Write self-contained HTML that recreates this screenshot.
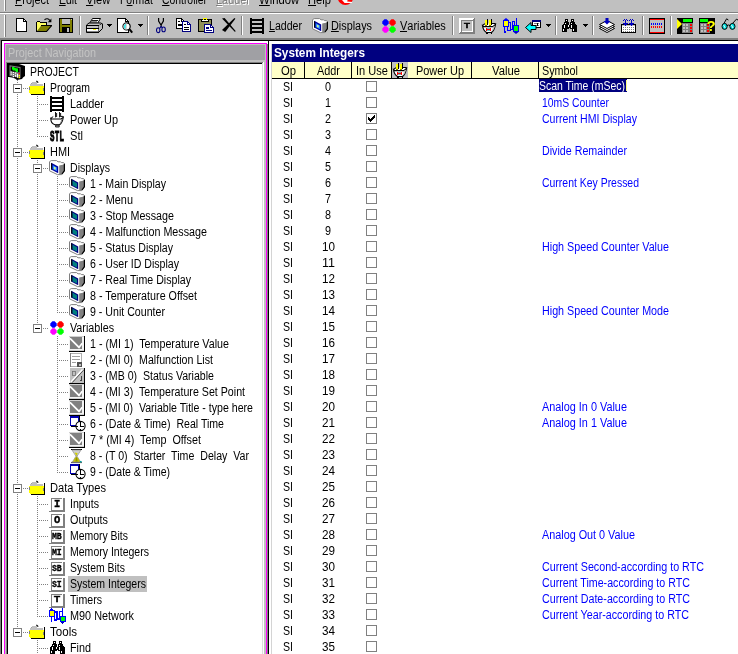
<!DOCTYPE html>
<html><head><meta charset="utf-8"><title>System Integers</title>
<style>
html,body{margin:0;padding:0;background:#c0c0c0;}
body{will-change:transform;width:738px;height:654px;overflow:hidden;position:relative;font-family:"Liberation Sans",sans-serif;}
.r{position:absolute;display:block;}
.t{position:absolute;display:inline-block;white-space:pre;font-size:12.5px;line-height:13px;transform-origin:0 0;}
u{text-decoration:none;border-bottom:1px solid currentColor;display:inline-block;line-height:7.6px;}
svg text{font-family:"Liberation Sans",sans-serif;}
.dv{width:1px;background:repeating-linear-gradient(to bottom,#808080 0,#808080 1px,transparent 1px,transparent 2px)}
.dh{height:1px;background:repeating-linear-gradient(to right,#808080 0,#808080 1px,transparent 1px,transparent 2px)}
</style></head><body>

<div class="r" style="left:4px;top:0px;width:1px;height:11px;background:#fff;"></div>
<div class="r" style="left:5px;top:0px;width:1px;height:11px;background:#808080;"></div>
<span class="t " style="left:15.4px;top:-5.8px;color:#000;transform:scaleX(0.874);"><u>P</u>roject</span>
<span class="t " style="left:59.4px;top:-5.8px;color:#000;transform:scaleX(0.835);"><u>E</u>dit</span>
<span class="t " style="left:86.4px;top:-5.8px;color:#000;transform:scaleX(0.893);"><u>V</u>iew</span>
<span class="t " style="left:120.4px;top:-5.8px;color:#000;transform:scaleX(0.833);">F<u>o</u>rmat</span>
<span class="t " style="left:162.4px;top:-5.8px;color:#000;transform:scaleX(0.830);"><u>C</u>ontroller</span>
<span class="t " style="left:259.4px;top:-5.8px;color:#000;transform:scaleX(0.900);"><u>W</u>indow</span>
<span class="t " style="left:308.4px;top:-5.8px;color:#000;transform:scaleX(0.894);"><u>H</u>elp</span>
<span class="t " style="left:217.4px;top:-4.8px;color:#fff;transform:scaleX(0.873);"><u>L</u>adder</span>
<span class="t " style="left:216.4px;top:-5.8px;color:#808080;transform:scaleX(0.873);"><u>L</u>adder</span>
<svg class="r" style="left:337px;top:0px;overflow:hidden;" width="18" height="7" viewBox="0 0 18 7"><circle cx="8.4" cy="-2.6" r="7.7" fill="#ff0000"/><polygon points="5,0 10.6,0 10.2,1.5 15.4,1.9 14.6,3 7.6,3" fill="#fff"/></svg>
<div class="r" style="left:0px;top:12px;width:738px;height:1px;background:#808080;"></div>
<div class="r" style="left:0px;top:13px;width:738px;height:1px;background:#fff;"></div>
<div class="r" style="left:4px;top:15px;width:1px;height:22px;background:#fff;"></div>
<div class="r" style="left:5px;top:15px;width:1px;height:22px;background:#808080;"></div>
<div class="r" style="left:79px;top:16px;width:1px;height:19px;background:#808080;"></div>
<div class="r" style="left:80px;top:16px;width:1px;height:19px;background:#fff;"></div>
<div class="r" style="left:147px;top:16px;width:1px;height:19px;background:#808080;"></div>
<div class="r" style="left:148px;top:16px;width:1px;height:19px;background:#fff;"></div>
<div class="r" style="left:241px;top:16px;width:1px;height:19px;background:#808080;"></div>
<div class="r" style="left:242px;top:16px;width:1px;height:19px;background:#fff;"></div>
<div class="r" style="left:452px;top:16px;width:1px;height:19px;background:#808080;"></div>
<div class="r" style="left:453px;top:16px;width:1px;height:19px;background:#fff;"></div>
<div class="r" style="left:555px;top:16px;width:1px;height:19px;background:#808080;"></div>
<div class="r" style="left:556px;top:16px;width:1px;height:19px;background:#fff;"></div>
<div class="r" style="left:592px;top:16px;width:1px;height:19px;background:#808080;"></div>
<div class="r" style="left:593px;top:16px;width:1px;height:19px;background:#fff;"></div>
<div class="r" style="left:642px;top:16px;width:1px;height:19px;background:#808080;"></div>
<div class="r" style="left:643px;top:16px;width:1px;height:19px;background:#fff;"></div>
<div class="r" style="left:670px;top:16px;width:1px;height:19px;background:#808080;"></div>
<div class="r" style="left:671px;top:16px;width:1px;height:19px;background:#fff;"></div>
<svg class="r" style="left:16px;top:18px;" width="11" height="14" viewBox="0 0 11 14" shape-rendering="crispEdges"><path d="M0.5 0.5H7.5L10.5 3.5V13.5H0.5z" fill="#fff" stroke="#000" stroke-width="1"/><path d="M7 1h1v3h-1zM8 3h2v1h-2z" fill="#000"/></svg>
<svg class="r" style="left:36px;top:18px;" width="16" height="14" viewBox="0 0 16 14" shape-rendering="crispEdges"><g shape-rendering="auto"><path d="M8.5 1.8 Q11.5 -0.6 14 2.6" fill="none" stroke="#000" stroke-width="1.1"/><path d="M15.4 0.6V4.2H11.8z" fill="#000"/></g><path d="M1 3h3v1h-3zM0 4h1v10h-1zM4 4h7v1h-7zM10 4h1v3h-1zM0 13h11v1h-11zM5 7h11v1h-11z" fill="#000"/><path d="M1 4h3v1h-3zM1 5h9v2h-9zM1 7h4v1h-4zM1 8h3v2h-3zM1 10h2v1h-2zM1 11h1v1h-1z" fill="#ffff60"/><polygon points="5,8 15.5,8 10.5,13 1,13" fill="#808000" shape-rendering="auto"/><path d="M15.6 7.6L10.6 13.4" stroke="#000" stroke-width="1.1" shape-rendering="auto"/></svg>
<svg class="r" style="left:59px;top:18px;" width="14" height="15" viewBox="0 0 14 15" shape-rendering="crispEdges"><path d="M0 0h14v15h-14z" fill="#000"/><path d="M1 1h2v13h-2zM11 1h2v13h-2zM3 7h8v2h-8z" fill="#808000"/><path d="M3 1h8v6h-8zM12 1h1v1h-1z" fill="#c0c0c0"/><path d="M3 6h8v1h-8z" fill="#000"/><path d="M8 10h2v4h-2z" fill="#c0c0c0"/></svg>
<svg class="r" style="left:86px;top:18px;" width="17" height="15" viewBox="0 0 17 15" shape-rendering="crispEdges"><g shape-rendering="auto"><polygon points="3.5,5.5 6.5,0.5 14.5,0.5 11.5,5.5" fill="#fff" stroke="#000" stroke-width="1"/><path d="M6 2.5H12M5 4H11" stroke="#000" stroke-width=".9"/><polygon points="0.5,7 3,5 14.8,5 16.5,6 16.5,10.5 12.5,14.5 0.5,14.5" fill="#c0c0c0" stroke="#000" stroke-width="1"/><path d="M12.5 7.5V14 M12.5 7.5L16.3 5.6" stroke="#000" stroke-width="1" stroke-dasharray="1 1"/></g><path d="M0 7h13v1h-13zM0 10h13v1h-13zM1 14h12v1h-12z" fill="#000"/><path d="M1 11h11v2h-11z" fill="#fff"/><path d="M1 13h11v1h-11z" fill="#808080"/><path d="M7 11h3v1h-3z" fill="#ffff00"/></svg>
<svg class="r" style="left:117px;top:18px;" width="16" height="16" viewBox="0 0 16 16" shape-rendering="crispEdges"><path d="M0.5 0.5H8.5L11.5 3.5V14.5H0.5z" fill="#fff" stroke="#000" stroke-width="1"/><path d="M8 1h1v3h-1zM9 3h2v1h-2z" fill="#000"/><g shape-rendering="auto"><circle cx="9.6" cy="8.4" r="3.6" fill="#fff" stroke="#000" stroke-width="1.2"/><path d="M9.6 5.2A3.2 3.2 0 0 0 9.6 11.6z" fill="#c0c0c0"/><path d="M8.6 6.4Q7 8 8 10.4" stroke="#00ffff" stroke-width="1.2" fill="none"/><path d="M12.4 11.2L15.2 14.6" stroke="#000" stroke-width="2"/></g></svg>
<svg class="r" style="left:156px;top:18px;" width="11" height="16" viewBox="0 0 11 16" shape-rendering="crispEdges"><g shape-rendering="auto" fill="none"><path d="M2.6 0V3L5.2 7.4V9 M7.4 0V3L4.8 7.4" stroke="#000" stroke-width="1.2"/><ellipse cx="2.2" cy="12.2" rx="1.7" ry="2.4" stroke="#000080" stroke-width="1.1"/><ellipse cx="7.6" cy="11.4" rx="1.7" ry="2.4" stroke="#000080" stroke-width="1.1"/><path d="M3.6 10.4L5 8.6L6.2 9.4" stroke="#000080" stroke-width="1.1"/></g></svg>
<svg class="r" style="left:176px;top:18px;" width="15" height="14" viewBox="0 0 15 14" shape-rendering="crispEdges"><path d="M0.5 0.5H5.5L8.5 3.5V10.5H0.5z" fill="#fff" stroke="#000" stroke-width="1"/><path d="M5 1h1v3h-1zM6 3h2v1h-2zM2 3h2v1h-2zM2 6h5v2h-5z" fill="#000"/><path d="M6.5 3.5H11.5L14.5 6.5V13.5H6.5z" fill="#fff" stroke="#000080" stroke-width="1"/><path d="M11 4h1v3h-1zM12 6h2v1h-2z" fill="#000080"/><path d="M8 6h2v1h-2zM8 9h5v1h-5zM8 11h5v1h-5z" fill="#000"/></svg>
<svg class="r" style="left:198px;top:18px;" width="16" height="15" viewBox="0 0 16 15" shape-rendering="crispEdges"><path d="M0 1h14v13h-14z" fill="#000"/><path d="M1 2h12v11h-12z" fill="#909058"/><path d="M3 1h8v3h-8z" fill="#000"/><path d="M4 2h6v1h-6z" fill="#fff"/><path d="M5 0h4v1h-4zM5 1h1v1h-1zM8 1h1v1h-1z" fill="#ffff00"/><path d="M6.5 6.5H12.5L15.5 9.5V14.5H6.5z" fill="#fff" stroke="#000080" stroke-width="1"/><path d="M12 7h1v3h-1zM13 9h2v1h-2zM8 9h3v2h-3zM8 12h6v1h-6z" fill="#000080"/></svg>
<svg class="r" style="left:222px;top:18px;" width="14" height="14" viewBox="0 0 14 14" shape-rendering="crispEdges"><g shape-rendering="auto"><path d="M0 0.5L2.6 0L13.6 13L13 14z" fill="#000"/><path d="M12.4 0L13.4 0.8L3.2 14L0 12z" fill="#000"/></g></svg>
<svg class="r" style="left:250px;top:18px;" width="14" height="16" viewBox="0 0 14 16" shape-rendering="crispEdges"><path d="M0 0h2v16h-2zM12 0h2v16h-2zM2 1h10v2h-10zM2 5h10v2h-10zM2 9h10v2h-10zM2 13h10v2h-10z" fill="#000"/></svg>
<svg class="r" style="left:312px;top:18px;" width="16" height="16" viewBox="0 0 16 16"><path d="M0.5 1.7L2.2 0.6H7.6L9 1.8H11.6L12.4 2.6H14.6L15.4 3.6V10.6L13.2 13.6L12.8 14.6H8.4L0.5 10.8Z" fill="#fff" stroke="#808080" stroke-width="1"/><polygon points="10.2,5.4 15,4.4 15,10.6 13,13.6 12.6,14.6 10.2,14.6" fill="#808080"/><path d="M15.4 3.8V10.6L13 14" stroke="#000" stroke-width="1.3" fill="none"/><polygon points="2.2,2.8 9.2,6.6 9.2,13.2 2.2,9.6" fill="#0000a0"/><polygon points="3.6,5 8,7.4 8,11.2 3.6,9" fill="#2080ff"/><polygon points="4.8,6.6 6.8,7.6 6.8,9.8 4.8,8.8" fill="#80e0ff"/><rect x="5.3" y="7.2" width="1" height="2.2" fill="#ffff40"/><path d="M2.6 3.2V9.6" stroke="#000" stroke-width="1"/></svg>
<svg class="r" style="left:382px;top:18px;" width="16" height="16" viewBox="0 0 16 16"><polygon points="2.4,1.3 4.6,1.3 6.7,3.4 6.7,5.6 4.6,7.7 2.4,7.7 0.3,5.6 0.3,3.4" fill="#0000ff"/><polygon points="9.4,1.3 11.6,1.3 13.7,3.4 13.7,5.6 11.6,7.7 9.4,7.7 7.3,5.6 7.3,3.4" fill="#ff0000"/><polygon points="2.4,8.3 4.6,8.3 6.7,10.4 6.7,12.6 4.6,14.7 2.4,14.7 0.3,12.6 0.3,10.4" fill="#ff00ff"/><polygon points="9.4,8.3 11.6,8.3 13.7,10.4 13.7,12.6 11.6,14.7 9.4,14.7 7.3,12.6 7.3,10.4" fill="#00ff00"/></svg>
<svg class="r" style="left:459px;top:18px;" width="16" height="16" viewBox="0 0 16 16" shape-rendering="crispEdges"><path d="M0 0h16v16h-16z" fill="#fff"/><path d="M14 0h2v16h-2zM0 14h16v2h-16z" fill="#808080"/><path d="M0 14h1v1h-1zM14 0h1v1h-1z" fill="#fff"/><path d="M2 2h12v12h-12z" fill="#808080"/><path d="M3 13h11v1h-11zM13 3h1v11h-1z" fill="#fff"/><path d="M3 3h10v10h-10z" fill="#c0c0c0"/></svg>
<span class="r" style="left:463.6px;top:21.4px;font:bold 9px/10px 'Liberation Sans',sans-serif;color:#000;-webkit-text-stroke:.5px #000;transform:scale(1.08,.9);transform-origin:0 0">T</span>
<svg class="r" style="left:481px;top:18px;" width="16" height="16" viewBox="0 0 16 16" shape-rendering="crispEdges"><polygon points="1.5,7.5 4,5.6 14,5.5 14.6,6.4 11.8,8.6 2.6,8.6" fill="#fff" shape-rendering="auto"/><path d="M4 2h2v6h-2zM8 2h2v6h-2z" fill="#ffff00"/><path d="M6 1h1v6h-1zM10 1h1v6h-1z" fill="#000"/><path d="M4 7h2v1h-2zM8 7h2v1h-2z" fill="#808000"/><g shape-rendering="auto"><path d="M1.5 7.6 Q2.2 12.6 5.5 14.5 H10.5 Q13.6 12 14.5 6.4 L11.8 8.6 H2.6z" fill="#fff" stroke="#000" stroke-width="1.1"/><path d="M1.5 7.5 L4 5.6 M11 5.5 H14 L14.6 6.4" fill="none" stroke="#000" stroke-width="1.1"/><path d="M12 9 L14 7.4 Q13.4 11.6 10.8 13.8z" fill="#c0c0c0"/></g><path d="M5 10h1.4v3h-1.4zM8.6 10h1.4v3h-1.4zM5 11h5v1h-5z" fill="#ff0000"/><path d="M6.4 10h2.2v1h-2.2zM6.4 12h2.2v1h-2.2z" fill="#60c0c0"/><path d="M5 15h6v1h-6z" fill="#000"/><path d="M6.5 15h3v1h-3z" fill="#c0c0c0"/></svg>
<svg class="r" style="left:503px;top:18px;" width="17" height="16" viewBox="0 0 17 16" shape-rendering="crispEdges"><path d="M2 13V15 M13.5 0V8 M5.5 4.5H7.5V11.5H9.5V3.5H11.5V8 M4.5 9V12.5H7.5" stroke="#0000ff" stroke-width="1" fill="none"/><path d="M0 2h6v7h-6zM10 7h6v7h-6zM1 9h1v6h-1z" fill="#0000ff"/><path d="M1 3h4v5h-4z" fill="#ffff00"/><path d="M11 8h4v5h-4z" fill="#00ff00"/><polygon points="3,0 5.5,2 0.5,2" fill="#0000ff" shape-rendering="auto"/><polygon points="10.5,14 15.5,14 13,16" fill="#0000c0" shape-rendering="auto"/></svg>
<svg class="r" style="left:525px;top:20px;" width="16" height="13" viewBox="0 0 16 13" shape-rendering="crispEdges"><path d="M7 0h9v2h-9z" fill="#000080"/><path d="M7 2h9v6h-9z" fill="#000"/><path d="M8 2h7v5h-7z" fill="#fff"/><path d="M9 3h5v1h-5zM9 5h5v1h-5z" fill="#808080"/><path d="M12 3h1v3h-1z" fill="#000"/><polygon points="0.5,7.5 6,2.5 6,5.5 11,5.5 11,9.5 6,9.5 6,12.5" fill="#00ffff" stroke="#000" stroke-width="1" shape-rendering="auto"/></svg>
<svg class="r" style="left:562px;top:19px;" width="15" height="13" viewBox="0 0 15 13" shape-rendering="crispEdges"><path d="M3 0h3v3h-3zM9 0h3v3h-3zM2 3h5v2h-5zM8 3h5v2h-5zM1 5h6v1h-6zM8 5h6v1h-6zM0 6h15v3h-15zM0 9h7v1h-7zM8 9h7v1h-7zM0 10h5v3h-5zM10 10h5v3h-5z" fill="#000"/><path d="M4 1h1v1h-1zM10 1h1v1h-1zM3 4h1v1h-1zM9 4h1v1h-1zM2 6h1v3h-1zM6 6h1v2h-1zM9 6h1v3h-1zM1 10h1v2h-1zM11 10h1v2h-1z" fill="#fff"/></svg>
<svg class="r" style="left:599px;top:18px;" width="16" height="16" viewBox="0 0 16 16" shape-rendering="crispEdges"><g shape-rendering="auto"><polygon points="0.5,10.5 8,6.5 15.5,10.5 8,14.5" fill="#fff" stroke="#000" stroke-width="1"/><polygon points="0.5,8.5 8,4.5 15.5,8.5 8,12.5" fill="#fff" stroke="#000" stroke-width="1"/><polygon points="0.5,6.5 8,2.5 15.5,6.5 8,10.5" fill="#fff" stroke="#000" stroke-width="1"/><polygon points="6.5,0 9.5,0 9.5,3 11.5,3 8,6.6 4.5,3 6.5,3" fill="#0000c0"/></g></svg>
<svg class="r" style="left:621px;top:19px;" width="15" height="14" viewBox="0 0 15 14" shape-rendering="crispEdges"><path d="M0 5h15v9h-15z" fill="#000"/><path d="M1 7h13v6h-13z" fill="#fff"/><path d="M1 6h13v1h-13z" fill="#c0c0c0"/><path d="M2 8h1v1h-1zM4 8h1v1h-1zM6 8h1v1h-1zM8 8h1v1h-1zM10 8h1v1h-1zM12 8h1v1h-1zM2 10h1v1h-1zM4 10h1v1h-1zM6 10h1v1h-1zM8 10h1v1h-1zM10 10h1v1h-1zM12 10h1v1h-1zM2 12h1v1h-1zM4 12h1v1h-1zM6 12h1v1h-1zM8 12h1v1h-1zM10 12h1v1h-1zM12 12h1v1h-1z" fill="#808080"/><path d="M3 0h1v1h-1zM5 0h1v1h-1zM9 0h1v1h-1zM11 0h1v1h-1zM2 1h1v1h-1zM4 1h1v1h-1zM6 1h1v1h-1zM8 1h1v1h-1zM10 1h1v1h-1zM12 1h1v1h-1zM4 2h1v3h-1zM10 2h1v3h-1zM2 4h5v1h-5zM8 4h5v1h-5zM3 5h3v1h-3zM9 5h3v1h-3zM4 6h1v1h-1zM10 6h1v1h-1z" fill="#0000c0"/></svg>
<svg class="r" style="left:649px;top:18px;" width="16" height="16" viewBox="0 0 16 16" shape-rendering="crispEdges"><path d="M0 0h16v16h-16z" fill="#000"/><path d="M1 1h14v14h-14z" fill="#c0c0c0"/><path d="M1 1h14v1h-14zM1 14h14v1h-14z" fill="#ff0000"/><path d="M2 5h1v2h-1zM4 5h1v2h-1zM6 5h1v2h-1zM8 5h1v2h-1zM10 5h1v2h-1zM12 5h1v2h-1z" fill="#0000ff"/><path d="M2 8h1v2h-1zM4 8h1v2h-1zM6 8h1v2h-1zM8 8h1v2h-1zM10 8h1v2h-1zM12 8h1v2h-1z" fill="#ff0000"/></svg>
<svg class="r" style="left:677px;top:18px;" width="16" height="16" viewBox="0 0 16 16" shape-rendering="crispEdges"><path d="M0 0h16v16h-16z" fill="#000"/><path d="M6 1h9v3h-9z" fill="#00ff00"/><path d="M5 5h11v10h-11z" fill="#808080"/><path d="M6 6h2v2h-2zM9 6h2v2h-2zM6 9h2v2h-2zM9 9h2v2h-2zM6 12h2v2h-2zM9 12h2v2h-2z" fill="#c0c0c0"/><path d="M13 6h2v2h-2zM13 9h2v2h-2zM13 12h2v2h-2z" fill="#ff0000"/><polygon points="0,1 5,6 0,11" fill="#ffff00" shape-rendering="auto"/></svg>
<svg class="r" style="left:699px;top:18px;" width="16" height="16" viewBox="0 0 16 16" shape-rendering="crispEdges"><path d="M0 0h16v16h-16z" fill="#000"/><path d="M1 1h8v3h-8z" fill="#00ff00"/><path d="M1 5h10v10h-10z" fill="#808080"/><path d="M2 6h2v2h-2zM5 6h2v2h-2zM2 9h2v2h-2zM5 9h2v2h-2zM2 12h2v2h-2zM5 12h2v2h-2z" fill="#c0c0c0"/><path d="M8 6h2v2h-2zM8 9h2v2h-2zM8 12h2v2h-2z" fill="#ff0000"/><text x="7.6" y="13.2" font-size="15" font-weight="bold" fill="#ffff00" stroke="#000" stroke-width=".5" paint-order="stroke" shape-rendering="auto">?</text></svg>
<svg class="r" style="left:721px;top:18px;" width="18" height="13" viewBox="0 0 18 13" shape-rendering="crispEdges"><g shape-rendering="auto" fill="none"><path d="M2 7L5.6 0.8L7.4 2 M10.5 6.6L15.4 1.2L17 2" stroke="#000" stroke-width="1"/><ellipse cx="3.6" cy="8.4" rx="2.6" ry="3" fill="#00e0e0" stroke="#000" stroke-width="1"/><ellipse cx="11.4" cy="8.4" rx="2.6" ry="3" fill="#00e0e0" stroke="#000" stroke-width="1"/><path d="M6 7.6Q7.5 6.4 9 7.6" stroke="#000" stroke-width="1"/><path d="M2.6 7L4.2 10M10.4 7L12 10" stroke="#fff" stroke-width=".9"/></g></svg>
<span class="t " style="left:269.4px;top:20.2px;color:#000;transform:scaleX(0.848);"><u>L</u>adder</span>
<span class="t " style="left:331.4px;top:20.2px;color:#000;transform:scaleX(0.868);"><u>D</u>isplays</span>
<span class="t " style="left:400.4px;top:20.2px;color:#000;transform:scaleX(0.879);"><u>V</u>ariables</span>
<svg class="r" style="left:107px;top:24px;" width="5" height="3" viewBox="0 0 5 3" shape-rendering="crispEdges"><path d="M0 0h5v1h-5zM1 1h3v1h-3zM2 2h1v1h-1z" fill="#000"/></svg>
<svg class="r" style="left:138px;top:24px;" width="5" height="3" viewBox="0 0 5 3" shape-rendering="crispEdges"><path d="M0 0h5v1h-5zM1 1h3v1h-3zM2 2h1v1h-1z" fill="#000"/></svg>
<svg class="r" style="left:546px;top:24px;" width="5" height="3" viewBox="0 0 5 3" shape-rendering="crispEdges"><path d="M0 0h5v1h-5zM1 1h3v1h-3zM2 2h1v1h-1z" fill="#000"/></svg>
<svg class="r" style="left:583px;top:24px;" width="5" height="3" viewBox="0 0 5 3" shape-rendering="crispEdges"><path d="M0 0h5v1h-5zM1 1h3v1h-3zM2 2h1v1h-1z" fill="#000"/></svg>
<div class="r" style="left:0px;top:38px;width:738px;height:2px;background:#808080;"></div>
<div class="r" style="left:0px;top:40px;width:1px;height:614px;background:#808080;"></div>
<div class="r" style="left:1px;top:40px;width:267px;height:614px;background:#000;"></div>
<div class="r" style="left:2px;top:41px;width:266px;height:613px;background:#fff;"></div>
<div class="r" style="left:4px;top:43px;width:263px;height:611px;background:#ff00ff;"></div>
<div class="r" style="left:5px;top:44px;width:261px;height:610px;background:#c0c0c0;"></div>
<div class="r" style="left:6px;top:45px;width:259px;height:15px;background:#a0a0a4;"></div>
<span class="t " style="left:8.4px;top:47.2px;color:#c4c4c4;transform:scaleX(0.867);">Project Navigation</span>
<div class="r" style="left:6px;top:62px;width:258px;height:592px;background:#808080;"></div>
<div class="r" style="left:7px;top:63px;width:257px;height:591px;background:#000;"></div>
<div class="r" style="left:263px;top:62px;width:1px;height:592px;background:#fff;"></div>
<div class="r" style="left:262px;top:63px;width:1px;height:591px;background:#dcdcdc;"></div>
<div class="r" style="left:8px;top:64px;width:254px;height:590px;background:#fff;"></div>
<div class="r" style="left:267px;top:44px;width:1px;height:610px;background:#808080;"></div>
<div class="r" style="left:268px;top:40px;width:470px;height:614px;background:#000;"></div>
<div class="r" style="left:269px;top:41px;width:469px;height:613px;background:#fff;"></div>
<div class="r" style="left:271px;top:44px;width:1px;height:610px;background:#d4d4d4;"></div>
<div class="r" style="left:272px;top:44px;width:466px;height:18px;background:#000080;"></div>
<span class="t " style="left:274.4px;top:47.2px;color:#fff;transform:scaleX(0.942);font-weight:bold;">System Integers</span>
<div class="r" style="left:272px;top:62px;width:466px;height:16px;background:#ffffc8;"></div>
<div class="r" style="left:272px;top:78px;width:466px;height:1px;background:#000;"></div>
<div class="r" style="left:304px;top:62px;width:1px;height:16px;background:#000;"></div>
<div class="r" style="left:351px;top:62px;width:1px;height:16px;background:#000;"></div>
<div class="r" style="left:391px;top:62px;width:1px;height:16px;background:#000;"></div>
<div class="r" style="left:471px;top:62px;width:1px;height:16px;background:#000;"></div>
<div class="r" style="left:538px;top:62px;width:1px;height:16px;background:#000;"></div>
<div class="r" style="left:392px;top:62px;width:16px;height:16px;background:#c0c0c0;"></div>
<svg class="r" style="left:392px;top:62px;" width="16" height="16" viewBox="0 0 16 16" shape-rendering="crispEdges"><polygon points="1.5,7.5 4,5.6 14,5.5 14.6,6.4 11.8,8.6 2.6,8.6" fill="#fff" shape-rendering="auto"/><path d="M4 2h2v6h-2zM8 2h2v6h-2z" fill="#ffff00"/><path d="M6 1h1v6h-1zM10 1h1v6h-1z" fill="#000"/><path d="M4 7h2v1h-2zM8 7h2v1h-2z" fill="#808000"/><g shape-rendering="auto"><path d="M1.5 7.6 Q2.2 12.6 5.5 14.5 H10.5 Q13.6 12 14.5 6.4 L11.8 8.6 H2.6z" fill="#fff" stroke="#000" stroke-width="1.1"/><path d="M1.5 7.5 L4 5.6 M11 5.5 H14 L14.6 6.4" fill="none" stroke="#000" stroke-width="1.1"/><path d="M12 9 L14 7.4 Q13.4 11.6 10.8 13.8z" fill="#c0c0c0"/></g><path d="M5 10h1.4v3h-1.4zM8.6 10h1.4v3h-1.4zM5 11h5v1h-5z" fill="#ff0000"/><path d="M6.4 10h2.2v1h-2.2zM6.4 12h2.2v1h-2.2z" fill="#60c0c0"/><path d="M5 15h6v1h-6z" fill="#000"/><path d="M6.5 15h3v1h-3z" fill="#c0c0c0"/></svg>
<span class="t " style="left:281.4px;top:65.2px;color:#000;transform:scaleX(0.899);">Op</span>
<span class="t " style="left:317.4px;top:65.2px;color:#000;transform:scaleX(0.871);">Addr</span>
<span class="t " style="left:356.4px;top:65.2px;color:#000;transform:scaleX(0.885);">In Use</span>
<span class="t " style="left:416.4px;top:65.2px;color:#000;transform:scaleX(0.874);">Power Up</span>
<span class="t " style="left:492.4px;top:65.2px;color:#000;transform:scaleX(0.902);">Value</span>
<span class="t " style="left:542.4px;top:65.2px;color:#000;transform:scaleX(0.864);">Symbol</span>
<div class="r" style="left:539px;top:79px;width:88px;height:13px;background:#000080;"></div>
<div class="r" style="left:625.6px;top:80px;width:1.2px;height:11px;background:#ffff80;"></div>
<span class="t " style="left:283.4px;top:81.2px;color:#000;transform:scaleX(0.847);">SI</span>
<span class="t " style="left:325.4px;top:81.2px;color:#000;transform:scaleX(0.863);">0</span>
<div class="r" style="left:366px;top:81px;width:11px;height:11px;background:#808080;"></div>
<div class="r" style="left:367px;top:82px;width:9px;height:9px;background:#fff;"></div>
<span class="t " style="left:539.4px;top:80.2px;color:#fff;transform:scaleX(0.836);">Scan Time (mSec)</span>
<span class="t " style="left:283.4px;top:97.2px;color:#000;transform:scaleX(0.847);">SI</span>
<span class="t " style="left:325.4px;top:97.2px;color:#000;transform:scaleX(0.863);">1</span>
<div class="r" style="left:366px;top:97px;width:11px;height:11px;background:#808080;"></div>
<div class="r" style="left:367px;top:98px;width:9px;height:9px;background:#fff;"></div>
<span class="t " style="left:542.4px;top:97.2px;color:#0000ff;transform:scaleX(0.831);">10mS Counter</span>
<span class="t " style="left:283.4px;top:113.2px;color:#000;transform:scaleX(0.847);">SI</span>
<span class="t " style="left:325.4px;top:113.2px;color:#000;transform:scaleX(0.863);">2</span>
<div class="r" style="left:366px;top:113px;width:11px;height:11px;background:#808080;"></div>
<div class="r" style="left:367px;top:114px;width:9px;height:9px;background:#fff;"></div>
<svg class="r" style="left:368px;top:115px;" width="7" height="7" viewBox="0 0 7 7" shape-rendering="crispEdges"><path d="M0 2h1v3h-1zM1 3h1v3h-1zM2 4h1v3h-1zM3 3h1v3h-1zM4 2h1v3h-1zM5 1h1v3h-1zM6 0h1v3h-1z" fill="#000"/></svg>
<span class="t " style="left:542.4px;top:113.2px;color:#0000ff;transform:scaleX(0.844);">Current HMI Display</span>
<span class="t " style="left:283.4px;top:129.2px;color:#000;transform:scaleX(0.847);">SI</span>
<span class="t " style="left:325.4px;top:129.2px;color:#000;transform:scaleX(0.863);">3</span>
<div class="r" style="left:366px;top:129px;width:11px;height:11px;background:#808080;"></div>
<div class="r" style="left:367px;top:130px;width:9px;height:9px;background:#fff;"></div>
<span class="t " style="left:283.4px;top:145.2px;color:#000;transform:scaleX(0.847);">SI</span>
<span class="t " style="left:325.4px;top:145.2px;color:#000;transform:scaleX(0.863);">4</span>
<div class="r" style="left:366px;top:145px;width:11px;height:11px;background:#808080;"></div>
<div class="r" style="left:367px;top:146px;width:9px;height:9px;background:#fff;"></div>
<span class="t " style="left:542.4px;top:145.2px;color:#0000ff;transform:scaleX(0.855);">Divide Remainder</span>
<span class="t " style="left:283.4px;top:161.2px;color:#000;transform:scaleX(0.847);">SI</span>
<span class="t " style="left:325.4px;top:161.2px;color:#000;transform:scaleX(0.863);">5</span>
<div class="r" style="left:366px;top:161px;width:11px;height:11px;background:#808080;"></div>
<div class="r" style="left:367px;top:162px;width:9px;height:9px;background:#fff;"></div>
<span class="t " style="left:283.4px;top:177.2px;color:#000;transform:scaleX(0.847);">SI</span>
<span class="t " style="left:325.4px;top:177.2px;color:#000;transform:scaleX(0.863);">6</span>
<div class="r" style="left:366px;top:177px;width:11px;height:11px;background:#808080;"></div>
<div class="r" style="left:367px;top:178px;width:9px;height:9px;background:#fff;"></div>
<span class="t " style="left:542.4px;top:177.2px;color:#0000ff;transform:scaleX(0.836);">Current Key Pressed</span>
<span class="t " style="left:283.4px;top:193.2px;color:#000;transform:scaleX(0.847);">SI</span>
<span class="t " style="left:325.4px;top:193.2px;color:#000;transform:scaleX(0.863);">7</span>
<div class="r" style="left:366px;top:193px;width:11px;height:11px;background:#808080;"></div>
<div class="r" style="left:367px;top:194px;width:9px;height:9px;background:#fff;"></div>
<span class="t " style="left:283.4px;top:209.2px;color:#000;transform:scaleX(0.847);">SI</span>
<span class="t " style="left:325.4px;top:209.2px;color:#000;transform:scaleX(0.863);">8</span>
<div class="r" style="left:366px;top:209px;width:11px;height:11px;background:#808080;"></div>
<div class="r" style="left:367px;top:210px;width:9px;height:9px;background:#fff;"></div>
<span class="t " style="left:283.4px;top:225.2px;color:#000;transform:scaleX(0.847);">SI</span>
<span class="t " style="left:325.4px;top:225.2px;color:#000;transform:scaleX(0.863);">9</span>
<div class="r" style="left:366px;top:225px;width:11px;height:11px;background:#808080;"></div>
<div class="r" style="left:367px;top:226px;width:9px;height:9px;background:#fff;"></div>
<span class="t " style="left:283.4px;top:241.2px;color:#000;transform:scaleX(0.847);">SI</span>
<span class="t " style="left:322.4px;top:241.2px;color:#000;transform:scaleX(0.935);">10</span>
<div class="r" style="left:366px;top:241px;width:11px;height:11px;background:#808080;"></div>
<div class="r" style="left:367px;top:242px;width:9px;height:9px;background:#fff;"></div>
<span class="t " style="left:542.4px;top:241.2px;color:#0000ff;transform:scaleX(0.859);">High Speed Counter Value</span>
<span class="t " style="left:283.4px;top:257.2px;color:#000;transform:scaleX(0.847);">SI</span>
<span class="t " style="left:322.4px;top:257.2px;color:#000;transform:scaleX(1.001);">11</span>
<div class="r" style="left:366px;top:257px;width:11px;height:11px;background:#808080;"></div>
<div class="r" style="left:367px;top:258px;width:9px;height:9px;background:#fff;"></div>
<span class="t " style="left:283.4px;top:273.2px;color:#000;transform:scaleX(0.847);">SI</span>
<span class="t " style="left:322.4px;top:273.2px;color:#000;transform:scaleX(0.935);">12</span>
<div class="r" style="left:366px;top:273px;width:11px;height:11px;background:#808080;"></div>
<div class="r" style="left:367px;top:274px;width:9px;height:9px;background:#fff;"></div>
<span class="t " style="left:283.4px;top:289.2px;color:#000;transform:scaleX(0.847);">SI</span>
<span class="t " style="left:322.4px;top:289.2px;color:#000;transform:scaleX(0.935);">13</span>
<div class="r" style="left:366px;top:289px;width:11px;height:11px;background:#808080;"></div>
<div class="r" style="left:367px;top:290px;width:9px;height:9px;background:#fff;"></div>
<span class="t " style="left:283.4px;top:305.2px;color:#000;transform:scaleX(0.847);">SI</span>
<span class="t " style="left:322.4px;top:305.2px;color:#000;transform:scaleX(0.935);">14</span>
<div class="r" style="left:366px;top:305px;width:11px;height:11px;background:#808080;"></div>
<div class="r" style="left:367px;top:306px;width:9px;height:9px;background:#fff;"></div>
<span class="t " style="left:542.4px;top:305.2px;color:#0000ff;transform:scaleX(0.858);">High Speed Counter Mode</span>
<span class="t " style="left:283.4px;top:321.2px;color:#000;transform:scaleX(0.847);">SI</span>
<span class="t " style="left:322.4px;top:321.2px;color:#000;transform:scaleX(0.935);">15</span>
<div class="r" style="left:366px;top:321px;width:11px;height:11px;background:#808080;"></div>
<div class="r" style="left:367px;top:322px;width:9px;height:9px;background:#fff;"></div>
<span class="t " style="left:283.4px;top:337.2px;color:#000;transform:scaleX(0.847);">SI</span>
<span class="t " style="left:322.4px;top:337.2px;color:#000;transform:scaleX(0.935);">16</span>
<div class="r" style="left:366px;top:337px;width:11px;height:11px;background:#808080;"></div>
<div class="r" style="left:367px;top:338px;width:9px;height:9px;background:#fff;"></div>
<span class="t " style="left:283.4px;top:353.2px;color:#000;transform:scaleX(0.847);">SI</span>
<span class="t " style="left:322.4px;top:353.2px;color:#000;transform:scaleX(0.935);">17</span>
<div class="r" style="left:366px;top:353px;width:11px;height:11px;background:#808080;"></div>
<div class="r" style="left:367px;top:354px;width:9px;height:9px;background:#fff;"></div>
<span class="t " style="left:283.4px;top:369.2px;color:#000;transform:scaleX(0.847);">SI</span>
<span class="t " style="left:322.4px;top:369.2px;color:#000;transform:scaleX(0.935);">18</span>
<div class="r" style="left:366px;top:369px;width:11px;height:11px;background:#808080;"></div>
<div class="r" style="left:367px;top:370px;width:9px;height:9px;background:#fff;"></div>
<span class="t " style="left:283.4px;top:385.2px;color:#000;transform:scaleX(0.847);">SI</span>
<span class="t " style="left:322.4px;top:385.2px;color:#000;transform:scaleX(0.935);">19</span>
<div class="r" style="left:366px;top:385px;width:11px;height:11px;background:#808080;"></div>
<div class="r" style="left:367px;top:386px;width:9px;height:9px;background:#fff;"></div>
<span class="t " style="left:283.4px;top:401.2px;color:#000;transform:scaleX(0.847);">SI</span>
<span class="t " style="left:322.4px;top:401.2px;color:#000;transform:scaleX(0.935);">20</span>
<div class="r" style="left:366px;top:401px;width:11px;height:11px;background:#808080;"></div>
<div class="r" style="left:367px;top:402px;width:9px;height:9px;background:#fff;"></div>
<span class="t " style="left:542.4px;top:401.2px;color:#0000ff;transform:scaleX(0.869);">Analog In 0 Value</span>
<span class="t " style="left:283.4px;top:417.2px;color:#000;transform:scaleX(0.847);">SI</span>
<span class="t " style="left:322.4px;top:417.2px;color:#000;transform:scaleX(0.935);">21</span>
<div class="r" style="left:366px;top:417px;width:11px;height:11px;background:#808080;"></div>
<div class="r" style="left:367px;top:418px;width:9px;height:9px;background:#fff;"></div>
<span class="t " style="left:542.4px;top:417.2px;color:#0000ff;transform:scaleX(0.869);">Analog In 1 Value</span>
<span class="t " style="left:283.4px;top:433.2px;color:#000;transform:scaleX(0.847);">SI</span>
<span class="t " style="left:322.4px;top:433.2px;color:#000;transform:scaleX(0.935);">22</span>
<div class="r" style="left:366px;top:433px;width:11px;height:11px;background:#808080;"></div>
<div class="r" style="left:367px;top:434px;width:9px;height:9px;background:#fff;"></div>
<span class="t " style="left:283.4px;top:449.2px;color:#000;transform:scaleX(0.847);">SI</span>
<span class="t " style="left:322.4px;top:449.2px;color:#000;transform:scaleX(0.935);">23</span>
<div class="r" style="left:366px;top:449px;width:11px;height:11px;background:#808080;"></div>
<div class="r" style="left:367px;top:450px;width:9px;height:9px;background:#fff;"></div>
<span class="t " style="left:283.4px;top:465.2px;color:#000;transform:scaleX(0.847);">SI</span>
<span class="t " style="left:322.4px;top:465.2px;color:#000;transform:scaleX(0.935);">24</span>
<div class="r" style="left:366px;top:465px;width:11px;height:11px;background:#808080;"></div>
<div class="r" style="left:367px;top:466px;width:9px;height:9px;background:#fff;"></div>
<span class="t " style="left:283.4px;top:481.2px;color:#000;transform:scaleX(0.847);">SI</span>
<span class="t " style="left:322.4px;top:481.2px;color:#000;transform:scaleX(0.935);">25</span>
<div class="r" style="left:366px;top:481px;width:11px;height:11px;background:#808080;"></div>
<div class="r" style="left:367px;top:482px;width:9px;height:9px;background:#fff;"></div>
<span class="t " style="left:283.4px;top:497.2px;color:#000;transform:scaleX(0.847);">SI</span>
<span class="t " style="left:322.4px;top:497.2px;color:#000;transform:scaleX(0.935);">26</span>
<div class="r" style="left:366px;top:497px;width:11px;height:11px;background:#808080;"></div>
<div class="r" style="left:367px;top:498px;width:9px;height:9px;background:#fff;"></div>
<span class="t " style="left:283.4px;top:513.2px;color:#000;transform:scaleX(0.847);">SI</span>
<span class="t " style="left:322.4px;top:513.2px;color:#000;transform:scaleX(0.935);">27</span>
<div class="r" style="left:366px;top:513px;width:11px;height:11px;background:#808080;"></div>
<div class="r" style="left:367px;top:514px;width:9px;height:9px;background:#fff;"></div>
<span class="t " style="left:283.4px;top:529.2px;color:#000;transform:scaleX(0.847);">SI</span>
<span class="t " style="left:322.4px;top:529.2px;color:#000;transform:scaleX(0.935);">28</span>
<div class="r" style="left:366px;top:529px;width:11px;height:11px;background:#808080;"></div>
<div class="r" style="left:367px;top:530px;width:9px;height:9px;background:#fff;"></div>
<span class="t " style="left:542.4px;top:529.2px;color:#0000ff;transform:scaleX(0.865);">Analog Out 0 Value</span>
<span class="t " style="left:283.4px;top:545.2px;color:#000;transform:scaleX(0.847);">SI</span>
<span class="t " style="left:322.4px;top:545.2px;color:#000;transform:scaleX(0.935);">29</span>
<div class="r" style="left:366px;top:545px;width:11px;height:11px;background:#808080;"></div>
<div class="r" style="left:367px;top:546px;width:9px;height:9px;background:#fff;"></div>
<span class="t " style="left:283.4px;top:561.2px;color:#000;transform:scaleX(0.847);">SI</span>
<span class="t " style="left:322.4px;top:561.2px;color:#000;transform:scaleX(0.935);">30</span>
<div class="r" style="left:366px;top:561px;width:11px;height:11px;background:#808080;"></div>
<div class="r" style="left:367px;top:562px;width:9px;height:9px;background:#fff;"></div>
<span class="t " style="left:542.4px;top:561.2px;color:#0000ff;transform:scaleX(0.858);">Current Second-according to RTC</span>
<span class="t " style="left:283.4px;top:577.2px;color:#000;transform:scaleX(0.847);">SI</span>
<span class="t " style="left:322.4px;top:577.2px;color:#000;transform:scaleX(0.935);">31</span>
<div class="r" style="left:366px;top:577px;width:11px;height:11px;background:#808080;"></div>
<div class="r" style="left:367px;top:578px;width:9px;height:9px;background:#fff;"></div>
<span class="t " style="left:542.4px;top:577.2px;color:#0000ff;transform:scaleX(0.853);">Current Time-according to RTC</span>
<span class="t " style="left:283.4px;top:593.2px;color:#000;transform:scaleX(0.847);">SI</span>
<span class="t " style="left:322.4px;top:593.2px;color:#000;transform:scaleX(0.935);">32</span>
<div class="r" style="left:366px;top:593px;width:11px;height:11px;background:#808080;"></div>
<div class="r" style="left:367px;top:594px;width:9px;height:9px;background:#fff;"></div>
<span class="t " style="left:542.4px;top:593.2px;color:#0000ff;transform:scaleX(0.857);">Current Date-according to RTC</span>
<span class="t " style="left:283.4px;top:609.2px;color:#000;transform:scaleX(0.847);">SI</span>
<span class="t " style="left:322.4px;top:609.2px;color:#000;transform:scaleX(0.935);">33</span>
<div class="r" style="left:366px;top:609px;width:11px;height:11px;background:#808080;"></div>
<div class="r" style="left:367px;top:610px;width:9px;height:9px;background:#fff;"></div>
<span class="t " style="left:542.4px;top:609.2px;color:#0000ff;transform:scaleX(0.858);">Current Year-according to RTC</span>
<span class="t " style="left:283.4px;top:625.2px;color:#000;transform:scaleX(0.847);">SI</span>
<span class="t " style="left:322.4px;top:625.2px;color:#000;transform:scaleX(0.935);">34</span>
<div class="r" style="left:366px;top:625px;width:11px;height:11px;background:#808080;"></div>
<div class="r" style="left:367px;top:626px;width:9px;height:9px;background:#fff;"></div>
<span class="t " style="left:283.4px;top:641.2px;color:#000;transform:scaleX(0.847);">SI</span>
<span class="t " style="left:322.4px;top:641.2px;color:#000;transform:scaleX(0.935);">35</span>
<div class="r" style="left:366px;top:641px;width:11px;height:11px;background:#808080;"></div>
<div class="r" style="left:367px;top:642px;width:9px;height:9px;background:#fff;"></div>
<div class="r dv" style="left:17px;top:80px;height:553px"></div>
<div class="r dv" style="left:37px;top:96px;height:41px"></div>
<div class="r dv" style="left:37px;top:160px;height:169px"></div>
<div class="r dv" style="left:37px;top:496px;height:121px"></div>
<div class="r dv" style="left:37px;top:640px;height:13px"></div>
<div class="r dv" style="left:57px;top:176px;height:137px"></div>
<div class="r dv" style="left:57px;top:336px;height:137px"></div>
<div class="r" style="left:68px;top:576px;width:79px;height:16px;background:#c0c0c0;"></div>
<svg class="r" style="left:8px;top:64px;" width="18" height="16" viewBox="0 0 18 16"><polygon points="0,0 11,0 14,1 17,2 17,12 15,13.5 14,15 9,16 7,14.5 4,13.5 1,13 0,13" fill="#000"/><polygon points="1.5,1.2 12.5,3 12.5,14 1.5,12" fill="#808080"/><polygon points="2.6,2.4 11.6,3.9 11.6,8.6 2.6,7.2" fill="#000"/><polygon points="4,3 6,3 7,4 10,4.4 10,8 8,8 7,6.6 5,6.4 4,5" fill="#00ff00"/><path d="M2.6 7.6h1.2v1.1h-1.2zM4.8 8h1.2v1.1h-1.2zM7 8.6h1.2v1.2h-1.2zM2.6 9.6h1.2v1.1h-1.2zM4.8 10h1.2v1.1h-1.2zM4.8 12h1.2v1.2h-1.2zM7 10.8h1.1v2h-1.1zM9 9.8h1v4h-1z" fill="#fff"/><path d="M10.6 9h1.4v1.2h-1.4z" fill="#ff0000"/><path d="M10.6 11h1.4v1.2h-1.4zM10.6 13h1.4v1.2h-1.4z" fill="#ffff00"/></svg>
<span class="t " style="left:30.4px;top:66.2px;color:#000;transform:scaleX(0.840);">PROJECT</span>
<div class="r" style="left:13px;top:84px;width:9px;height:9px;background:#808080;"></div>
<div class="r" style="left:14px;top:85px;width:7px;height:7px;background:#fff;"></div>
<div class="r" style="left:15px;top:88px;width:5px;height:1px;background:#000;"></div>
<div class="r dh" style="left:23px;top:88px;width:5px"></div>
<svg class="r" style="left:29px;top:80px;" width="16" height="16" viewBox="0 0 16 16" shape-rendering="crispEdges"><path d="M3 2h5v2h-5zM1 4h13v2h-13z" fill="#c0c0c0"/><path d="M2 3h1v1h-1z" fill="#a0a0a0"/><path d="M7.4 0.8l1.8 1.8" stroke="#000" stroke-width="1.2" fill="none" shape-rendering="auto"/><path d="M0 6h15v7h-15zM1 13h14v1h-14z" fill="#ffff00"/><path d="M15 3h1v12h-1zM2 14h14v1h-14z" fill="#000"/><path d="M0 7h1v3h-1zM14 8h1v3h-1z" fill="#808080"/></svg>
<span class="t " style="left:50.4px;top:82.2px;color:#000;transform:scaleX(0.834);">Program</span>
<div class="r dh" style="left:39px;top:104px;width:9px"></div>
<svg class="r" style="left:50px;top:96px;" width="14" height="16" viewBox="0 0 14 16" shape-rendering="crispEdges"><path d="M0 0h2v16h-2zM12 0h2v16h-2zM2 1h10v2h-10zM2 5h10v2h-10zM2 9h10v2h-10zM2 13h10v2h-10z" fill="#000"/></svg>
<span class="t " style="left:70.4px;top:98.2px;color:#000;transform:scaleX(0.873);">Ladder</span>
<div class="r dh" style="left:39px;top:120px;width:9px"></div>
<svg class="r" style="left:50px;top:112px;" width="14" height="16" viewBox="0 0 14 16"><path d="M5.5 0v5.4M6.6 1v4M9.5 0v5.4M10.6 1v4" stroke="#000" stroke-width=".9" fill="none"/><path d="M0.8 6.4 Q0.8 11.4 5 12.7 H9.4 Q12.4 11.4 13.3 5.2 L11.2 7 H1.6z" stroke="#000" stroke-width="1.1" fill="#fff"/><path d="M0.8 6.4 L3.2 4.6 M11 4.4 H12.8 L13.4 5.2" stroke="#000" stroke-width="1" fill="none"/><path d="M11.4 7.4 L12.8 6.2 Q12.2 10.4 9.8 12.2 z" fill="#808080"/><path d="M5.6 13.2h3.6v1.8h-3.6z" fill="#a0a0a0" stroke="#000" stroke-width=".8"/></svg>
<span class="t " style="left:70.4px;top:114.2px;color:#000;transform:scaleX(0.874);">Power Up</span>
<div class="r dh" style="left:39px;top:136px;width:9px"></div>
<span class="r" style="left:50.2px;top:128.6px;font:bold 14.4px/14px 'Liberation Sans',sans-serif;transform:scaleX(.46);transform-origin:0 0;letter-spacing:1.4px;-webkit-text-stroke:1.2px #000;color:#000">STL</span>
<span class="t " style="left:70.4px;top:130.2px;color:#000;transform:scaleX(0.891);">Stl</span>
<div class="r" style="left:13px;top:148px;width:9px;height:9px;background:#808080;"></div>
<div class="r" style="left:14px;top:149px;width:7px;height:7px;background:#fff;"></div>
<div class="r" style="left:15px;top:152px;width:5px;height:1px;background:#000;"></div>
<div class="r dh" style="left:23px;top:152px;width:5px"></div>
<svg class="r" style="left:29px;top:144px;" width="16" height="16" viewBox="0 0 16 16" shape-rendering="crispEdges"><path d="M3 2h5v2h-5zM1 4h13v2h-13z" fill="#c0c0c0"/><path d="M2 3h1v1h-1z" fill="#a0a0a0"/><path d="M7.4 0.8l1.8 1.8" stroke="#000" stroke-width="1.2" fill="none" shape-rendering="auto"/><path d="M0 6h15v7h-15zM1 13h14v1h-14z" fill="#ffff00"/><path d="M15 3h1v12h-1zM2 14h14v1h-14z" fill="#000"/><path d="M0 7h1v3h-1zM14 8h1v3h-1z" fill="#808080"/></svg>
<span class="t " style="left:50.4px;top:146.2px;color:#000;transform:scaleX(0.873);">HMI</span>
<div class="r" style="left:33px;top:164px;width:9px;height:9px;background:#808080;"></div>
<div class="r" style="left:34px;top:165px;width:7px;height:7px;background:#fff;"></div>
<div class="r" style="left:35px;top:168px;width:5px;height:1px;background:#000;"></div>
<div class="r dh" style="left:43px;top:168px;width:5px"></div>
<svg class="r" style="left:49px;top:160px;" width="16" height="16" viewBox="0 0 16 16"><path d="M0.5 1.7L2.2 0.6H7.6L9 1.8H11.6L12.4 2.6H14.6L15.4 3.6V10.6L13.2 13.6L12.8 14.6H8.4L0.5 10.8Z" fill="#fff" stroke="#808080" stroke-width="1"/><polygon points="10.2,5.4 15,4.4 15,10.6 13,13.6 12.6,14.6 10.2,14.6" fill="#808080"/><path d="M15.4 3.8V10.6L13 14" stroke="#000" stroke-width="1.3" fill="none"/><polygon points="2.2,2.8 9.2,6.6 9.2,13.2 2.2,9.6" fill="#0000a0"/><polygon points="3.6,5 8,7.4 8,11.2 3.6,9" fill="#2080ff"/><polygon points="4.8,6.6 6.8,7.6 6.8,9.8 4.8,8.8" fill="#80e0ff"/><rect x="5.3" y="7.2" width="1" height="2.2" fill="#ffff40"/><path d="M2.6 3.2V9.6" stroke="#000" stroke-width="1"/></svg>
<span class="t " style="left:70.4px;top:162.2px;color:#000;transform:scaleX(0.847);">Displays</span>
<div class="r dh" style="left:59px;top:184px;width:9px"></div>
<svg class="r" style="left:69px;top:176px;" width="16" height="16" viewBox="0 0 16 16"><path d="M0.5 1.7L2.2 0.6H7.6L9 1.8H11.6L12.4 2.6H14.6L15.4 3.6V10.6L13.2 13.6L12.8 14.6H8.4L0.5 10.8Z" fill="#fff" stroke="#808080" stroke-width="1"/><polygon points="10.2,5.4 15,4.4 15,10.6 13,13.6 12.6,14.6 10.2,14.6" fill="#808080"/><path d="M15.4 3.8V10.6L13 14" stroke="#000" stroke-width="1.3" fill="none"/><polygon points="2.2,2.8 9.2,6.6 9.2,13.2 2.2,9.6" fill="#000080"/><polygon points="3.4,4.6 8,7.2 8,11.6 3.4,9.2" fill="#008080"/><path d="M2.7 3.2V9.6" stroke="#000" stroke-width="1.1"/></svg>
<span class="t " style="left:90.4px;top:178.2px;color:#000;transform:scaleX(0.848);">1 - Main Display</span>
<div class="r dh" style="left:59px;top:200px;width:9px"></div>
<svg class="r" style="left:69px;top:192px;" width="16" height="16" viewBox="0 0 16 16"><path d="M0.5 1.7L2.2 0.6H7.6L9 1.8H11.6L12.4 2.6H14.6L15.4 3.6V10.6L13.2 13.6L12.8 14.6H8.4L0.5 10.8Z" fill="#fff" stroke="#808080" stroke-width="1"/><polygon points="10.2,5.4 15,4.4 15,10.6 13,13.6 12.6,14.6 10.2,14.6" fill="#808080"/><path d="M15.4 3.8V10.6L13 14" stroke="#000" stroke-width="1.3" fill="none"/><polygon points="2.2,2.8 9.2,6.6 9.2,13.2 2.2,9.6" fill="#000080"/><polygon points="3.4,4.6 8,7.2 8,11.6 3.4,9.2" fill="#008080"/><path d="M2.7 3.2V9.6" stroke="#000" stroke-width="1.1"/></svg>
<span class="t " style="left:90.4px;top:194.2px;color:#000;transform:scaleX(0.871);">2 - Menu</span>
<div class="r dh" style="left:59px;top:216px;width:9px"></div>
<svg class="r" style="left:69px;top:208px;" width="16" height="16" viewBox="0 0 16 16"><path d="M0.5 1.7L2.2 0.6H7.6L9 1.8H11.6L12.4 2.6H14.6L15.4 3.6V10.6L13.2 13.6L12.8 14.6H8.4L0.5 10.8Z" fill="#fff" stroke="#808080" stroke-width="1"/><polygon points="10.2,5.4 15,4.4 15,10.6 13,13.6 12.6,14.6 10.2,14.6" fill="#808080"/><path d="M15.4 3.8V10.6L13 14" stroke="#000" stroke-width="1.3" fill="none"/><polygon points="2.2,2.8 9.2,6.6 9.2,13.2 2.2,9.6" fill="#000080"/><polygon points="3.4,4.6 8,7.2 8,11.6 3.4,9.2" fill="#008080"/><path d="M2.7 3.2V9.6" stroke="#000" stroke-width="1.1"/></svg>
<span class="t " style="left:90.4px;top:210.2px;color:#000;transform:scaleX(0.857);">3 - Stop Message</span>
<div class="r dh" style="left:59px;top:232px;width:9px"></div>
<svg class="r" style="left:69px;top:224px;" width="16" height="16" viewBox="0 0 16 16"><path d="M0.5 1.7L2.2 0.6H7.6L9 1.8H11.6L12.4 2.6H14.6L15.4 3.6V10.6L13.2 13.6L12.8 14.6H8.4L0.5 10.8Z" fill="#fff" stroke="#808080" stroke-width="1"/><polygon points="10.2,5.4 15,4.4 15,10.6 13,13.6 12.6,14.6 10.2,14.6" fill="#808080"/><path d="M15.4 3.8V10.6L13 14" stroke="#000" stroke-width="1.3" fill="none"/><polygon points="2.2,2.8 9.2,6.6 9.2,13.2 2.2,9.6" fill="#000080"/><polygon points="3.4,4.6 8,7.2 8,11.6 3.4,9.2" fill="#008080"/><path d="M2.7 3.2V9.6" stroke="#000" stroke-width="1.1"/></svg>
<span class="t " style="left:90.4px;top:226.2px;color:#000;transform:scaleX(0.859);">4 - Malfunction Message</span>
<div class="r dh" style="left:59px;top:248px;width:9px"></div>
<svg class="r" style="left:69px;top:240px;" width="16" height="16" viewBox="0 0 16 16"><path d="M0.5 1.7L2.2 0.6H7.6L9 1.8H11.6L12.4 2.6H14.6L15.4 3.6V10.6L13.2 13.6L12.8 14.6H8.4L0.5 10.8Z" fill="#fff" stroke="#808080" stroke-width="1"/><polygon points="10.2,5.4 15,4.4 15,10.6 13,13.6 12.6,14.6 10.2,14.6" fill="#808080"/><path d="M15.4 3.8V10.6L13 14" stroke="#000" stroke-width="1.3" fill="none"/><polygon points="2.2,2.8 9.2,6.6 9.2,13.2 2.2,9.6" fill="#000080"/><polygon points="3.4,4.6 8,7.2 8,11.6 3.4,9.2" fill="#008080"/><path d="M2.7 3.2V9.6" stroke="#000" stroke-width="1.1"/></svg>
<span class="t " style="left:90.4px;top:242.2px;color:#000;transform:scaleX(0.847);">5 - Status Display</span>
<div class="r dh" style="left:59px;top:264px;width:9px"></div>
<svg class="r" style="left:69px;top:256px;" width="16" height="16" viewBox="0 0 16 16"><path d="M0.5 1.7L2.2 0.6H7.6L9 1.8H11.6L12.4 2.6H14.6L15.4 3.6V10.6L13.2 13.6L12.8 14.6H8.4L0.5 10.8Z" fill="#fff" stroke="#808080" stroke-width="1"/><polygon points="10.2,5.4 15,4.4 15,10.6 13,13.6 12.6,14.6 10.2,14.6" fill="#808080"/><path d="M15.4 3.8V10.6L13 14" stroke="#000" stroke-width="1.3" fill="none"/><polygon points="2.2,2.8 9.2,6.6 9.2,13.2 2.2,9.6" fill="#000080"/><polygon points="3.4,4.6 8,7.2 8,11.6 3.4,9.2" fill="#008080"/><path d="M2.7 3.2V9.6" stroke="#000" stroke-width="1.1"/></svg>
<span class="t " style="left:90.4px;top:258.2px;color:#000;transform:scaleX(0.849);">6 - User ID Display</span>
<div class="r dh" style="left:59px;top:280px;width:9px"></div>
<svg class="r" style="left:69px;top:272px;" width="16" height="16" viewBox="0 0 16 16"><path d="M0.5 1.7L2.2 0.6H7.6L9 1.8H11.6L12.4 2.6H14.6L15.4 3.6V10.6L13.2 13.6L12.8 14.6H8.4L0.5 10.8Z" fill="#fff" stroke="#808080" stroke-width="1"/><polygon points="10.2,5.4 15,4.4 15,10.6 13,13.6 12.6,14.6 10.2,14.6" fill="#808080"/><path d="M15.4 3.8V10.6L13 14" stroke="#000" stroke-width="1.3" fill="none"/><polygon points="2.2,2.8 9.2,6.6 9.2,13.2 2.2,9.6" fill="#000080"/><polygon points="3.4,4.6 8,7.2 8,11.6 3.4,9.2" fill="#008080"/><path d="M2.7 3.2V9.6" stroke="#000" stroke-width="1.1"/></svg>
<span class="t " style="left:90.4px;top:274.2px;color:#000;transform:scaleX(0.850);">7 - Real Time Display</span>
<div class="r dh" style="left:59px;top:296px;width:9px"></div>
<svg class="r" style="left:69px;top:288px;" width="16" height="16" viewBox="0 0 16 16"><path d="M0.5 1.7L2.2 0.6H7.6L9 1.8H11.6L12.4 2.6H14.6L15.4 3.6V10.6L13.2 13.6L12.8 14.6H8.4L0.5 10.8Z" fill="#fff" stroke="#808080" stroke-width="1"/><polygon points="10.2,5.4 15,4.4 15,10.6 13,13.6 12.6,14.6 10.2,14.6" fill="#808080"/><path d="M15.4 3.8V10.6L13 14" stroke="#000" stroke-width="1.3" fill="none"/><polygon points="2.2,2.8 9.2,6.6 9.2,13.2 2.2,9.6" fill="#000080"/><polygon points="3.4,4.6 8,7.2 8,11.6 3.4,9.2" fill="#008080"/><path d="M2.7 3.2V9.6" stroke="#000" stroke-width="1.1"/></svg>
<span class="t " style="left:90.4px;top:290.2px;color:#000;transform:scaleX(0.859);">8 - Temperature Offset</span>
<div class="r dh" style="left:59px;top:312px;width:9px"></div>
<svg class="r" style="left:69px;top:304px;" width="16" height="16" viewBox="0 0 16 16"><path d="M0.5 1.7L2.2 0.6H7.6L9 1.8H11.6L12.4 2.6H14.6L15.4 3.6V10.6L13.2 13.6L12.8 14.6H8.4L0.5 10.8Z" fill="#fff" stroke="#808080" stroke-width="1"/><polygon points="10.2,5.4 15,4.4 15,10.6 13,13.6 12.6,14.6 10.2,14.6" fill="#808080"/><path d="M15.4 3.8V10.6L13 14" stroke="#000" stroke-width="1.3" fill="none"/><polygon points="2.2,2.8 9.2,6.6 9.2,13.2 2.2,9.6" fill="#000080"/><polygon points="3.4,4.6 8,7.2 8,11.6 3.4,9.2" fill="#008080"/><path d="M2.7 3.2V9.6" stroke="#000" stroke-width="1.1"/></svg>
<span class="t " style="left:90.4px;top:306.2px;color:#000;transform:scaleX(0.850);">9 - Unit Counter</span>
<div class="r" style="left:33px;top:324px;width:9px;height:9px;background:#808080;"></div>
<div class="r" style="left:34px;top:325px;width:7px;height:7px;background:#fff;"></div>
<div class="r" style="left:35px;top:328px;width:5px;height:1px;background:#000;"></div>
<div class="r dh" style="left:43px;top:328px;width:5px"></div>
<svg class="r" style="left:50px;top:320px;" width="16" height="16" viewBox="0 0 16 16"><polygon points="2.4,1.3 4.6,1.3 6.7,3.4 6.7,5.6 4.6,7.7 2.4,7.7 0.3,5.6 0.3,3.4" fill="#0000ff"/><polygon points="9.4,1.3 11.6,1.3 13.7,3.4 13.7,5.6 11.6,7.7 9.4,7.7 7.3,5.6 7.3,3.4" fill="#ff0000"/><polygon points="2.4,8.3 4.6,8.3 6.7,10.4 6.7,12.6 4.6,14.7 2.4,14.7 0.3,12.6 0.3,10.4" fill="#ff00ff"/><polygon points="9.4,8.3 11.6,8.3 13.7,10.4 13.7,12.6 11.6,14.7 9.4,14.7 7.3,12.6 7.3,10.4" fill="#00ff00"/></svg>
<span class="t " style="left:70.4px;top:322.2px;color:#000;transform:scaleX(0.860);">Variables</span>
<div class="r dh" style="left:59px;top:344px;width:9px"></div>
<svg class="r" style="left:69px;top:336px;" width="16" height="16" viewBox="0 0 16 16" shape-rendering="crispEdges"><path d="M0 0h16v16h-16z" fill="#000"/><path d="M0 0h15v15h-15z" fill="#f4f4f4"/><path d="M0 0h15v1h-15zM0 14h15v1h-15z" fill="#d0d0d0"/><path d="M1 1h12v12h-12z" fill="#808080"/><path d="M1 2.4L10 11.4L13.2 7.2" stroke="#fff" stroke-width="1.7" fill="none" shape-rendering="auto"/></svg>
<span class="t " style="left:90.4px;top:338.2px;color:#000;transform:scaleX(0.857);">1 - (MI 1)  Temperature Value</span>
<div class="r dh" style="left:59px;top:360px;width:9px"></div>
<svg class="r" style="left:69px;top:352px;" width="16" height="16" viewBox="0 0 16 16" shape-rendering="crispEdges"><path d="M1 1h12v14h-12z" fill="#b0b0b0"/><path d="M1 1h1v14h-1z" fill="#808080"/><path d="M2 2h10v12h-10z" fill="#fff"/><path d="M3 3.5h8v1h-8zM3 6.5h8v1h-8zM3 9.5h4v1h-4z" fill="#a0a0a0"/><path d="M8 10h5v5h-5z" fill="#505050"/><path d="M9.5 11.5h2.5v2.5h-2.5z" fill="#c0c0c0"/></svg>
<span class="t " style="left:90.4px;top:354.2px;color:#000;transform:scaleX(0.851);">2 - (MI 0)  Malfunction List</span>
<div class="r dh" style="left:59px;top:376px;width:9px"></div>
<svg class="r" style="left:69px;top:368px;" width="16" height="16" viewBox="0 0 16 16" shape-rendering="crispEdges"><path d="M1 0h14v15h-14z" fill="#c0c0c0"/><path d="M15 0h1v16h-1zM0 15h16v1h-16z" fill="#000"/><path d="M2 14L13.5 1.5" stroke="#fff" stroke-width="1.6" fill="none" shape-rendering="auto"/><path d="M3.2 14.6L14.6 2.2" stroke="#202020" stroke-width=".7" fill="none" shape-rendering="auto"/><rect x="3.5" y="3.5" width="3" height="4" fill="none" stroke="#707070" stroke-width=".8" shape-rendering="auto"/><path d="M12 8h1v5h-1zM10.5 12h1.5v1h-1.5z" fill="#404040"/></svg>
<span class="t " style="left:90.4px;top:370.2px;color:#000;transform:scaleX(0.847);">3 - (MB 0)  Status Variable</span>
<div class="r dh" style="left:59px;top:392px;width:9px"></div>
<svg class="r" style="left:69px;top:384px;" width="16" height="16" viewBox="0 0 16 16" shape-rendering="crispEdges"><path d="M0 0h16v16h-16z" fill="#000"/><path d="M0 0h15v15h-15z" fill="#f4f4f4"/><path d="M0 0h15v1h-15zM0 14h15v1h-15z" fill="#d0d0d0"/><path d="M1 1h12v12h-12z" fill="#808080"/><path d="M1 2.4L10 11.4L13.2 7.2" stroke="#fff" stroke-width="1.7" fill="none" shape-rendering="auto"/></svg>
<span class="t " style="left:90.4px;top:386.2px;color:#000;transform:scaleX(0.853);">4 - (MI 3)  Temperature Set Point</span>
<div class="r dh" style="left:59px;top:408px;width:9px"></div>
<svg class="r" style="left:69px;top:400px;" width="16" height="16" viewBox="0 0 16 16" shape-rendering="crispEdges"><path d="M0 0h16v16h-16z" fill="#000"/><path d="M0 0h15v15h-15z" fill="#f4f4f4"/><path d="M0 0h15v1h-15zM0 14h15v1h-15z" fill="#d0d0d0"/><path d="M1 1h12v12h-12z" fill="#808080"/><path d="M1 2.4L10 11.4L13.2 7.2" stroke="#fff" stroke-width="1.7" fill="none" shape-rendering="auto"/></svg>
<span class="t " style="left:90.4px;top:402.2px;color:#000;transform:scaleX(0.848);">5 - (MI 0)  Variable Title - type here</span>
<div class="r dh" style="left:59px;top:424px;width:9px"></div>
<svg class="r" style="left:69px;top:416px;" width="17" height="16" viewBox="0 0 17 16" shape-rendering="crispEdges"><path d="M1 0h9v10h-9z" fill="#0000b0"/><path d="M2 2h7v7h-7z" fill="#fff"/><path d="M10 0h1v6h-1zM2 10h6v1h-6z" fill="#000"/><circle cx="11.5" cy="10" r="4.6" fill="#fff" stroke="#000" stroke-width="1.1" shape-rendering="auto"/><path d="M11 6h1v5h-1zM11 10h4v1h-4zM7 10h2v1h-2zM11 13h1v1h-1z" fill="#000"/></svg>
<span class="t " style="left:90.4px;top:418.2px;color:#000;transform:scaleX(0.846);">6 - (Date &amp; Time)  Real Time</span>
<div class="r dh" style="left:59px;top:440px;width:9px"></div>
<svg class="r" style="left:69px;top:432px;" width="16" height="16" viewBox="0 0 16 16" shape-rendering="crispEdges"><path d="M0 0h16v16h-16z" fill="#000"/><path d="M0 0h15v15h-15z" fill="#f4f4f4"/><path d="M0 0h15v1h-15zM0 14h15v1h-15z" fill="#d0d0d0"/><path d="M1 1h12v12h-12z" fill="#808080"/><path d="M1 2.4L10 11.4L13.2 7.2" stroke="#fff" stroke-width="1.7" fill="none" shape-rendering="auto"/></svg>
<span class="t " style="left:90.4px;top:434.2px;color:#000;transform:scaleX(0.862);">7 * (MI 4)  Temp  Offset</span>
<div class="r dh" style="left:59px;top:456px;width:9px"></div>
<svg class="r" style="left:69px;top:448px;" width="16" height="16" viewBox="0 0 16 16"><path d="M2 1.5h11" stroke="#000" stroke-width="1"/><path d="M2 14.5h11" stroke="#606060" stroke-width="1.2"/><polygon points="3,2 12,2 8.2,8 6.8,8" fill="#d0d0d0" stroke="#909090" stroke-width=".7"/><polygon points="5.6,4.4 8.6,5 7.9,7.6 7.1,7.6" fill="#d0d000"/><polygon points="6.8,8.4 8.2,8.4 11.6,14 3.4,14" fill="#c8c800" stroke="#909090" stroke-width=".7"/><polygon points="7,9.6 8,9.6 8.6,13.6 6.4,13.6" fill="#909000"/><rect x="11" y="13" width="1.6" height="1.4" fill="#00a0a0"/></svg>
<span class="t " style="left:90.4px;top:450.2px;color:#000;transform:scaleX(0.850);">8 - (T 0)  Starter  Time  Delay  Var</span>
<div class="r dh" style="left:59px;top:472px;width:9px"></div>
<svg class="r" style="left:69px;top:464px;" width="17" height="16" viewBox="0 0 17 16" shape-rendering="crispEdges"><path d="M1 0h9v10h-9z" fill="#0000b0"/><path d="M2 2h7v7h-7z" fill="#fff"/><path d="M10 0h1v6h-1zM2 10h6v1h-6z" fill="#000"/><circle cx="11.5" cy="10" r="4.6" fill="#fff" stroke="#000" stroke-width="1.1" shape-rendering="auto"/><path d="M11 6h1v5h-1zM11 10h4v1h-4zM7 10h2v1h-2zM11 13h1v1h-1z" fill="#000"/></svg>
<span class="t " style="left:90.4px;top:466.2px;color:#000;transform:scaleX(0.841);">9 - (Date &amp; Time)</span>
<div class="r" style="left:13px;top:484px;width:9px;height:9px;background:#808080;"></div>
<div class="r" style="left:14px;top:485px;width:7px;height:7px;background:#fff;"></div>
<div class="r" style="left:15px;top:488px;width:5px;height:1px;background:#000;"></div>
<div class="r dh" style="left:23px;top:488px;width:5px"></div>
<svg class="r" style="left:29px;top:480px;" width="16" height="16" viewBox="0 0 16 16" shape-rendering="crispEdges"><path d="M3 2h5v2h-5zM1 4h13v2h-13z" fill="#c0c0c0"/><path d="M2 3h1v1h-1z" fill="#a0a0a0"/><path d="M7.4 0.8l1.8 1.8" stroke="#000" stroke-width="1.2" fill="none" shape-rendering="auto"/><path d="M0 6h15v7h-15zM1 13h14v1h-14z" fill="#ffff00"/><path d="M15 3h1v12h-1zM2 14h14v1h-14z" fill="#000"/><path d="M0 7h1v3h-1zM14 8h1v3h-1z" fill="#808080"/></svg>
<span class="t " style="left:50.4px;top:482.2px;color:#000;transform:scaleX(0.889);">Data Types</span>
<div class="r dh" style="left:39px;top:504px;width:9px"></div>
<svg class="r" style="left:49px;top:496px;" width="16" height="16" viewBox="0 0 16 16" shape-rendering="crispEdges"><path d="M3 3h11v11h-11z" fill="#fff"/><path d="M2 2h11v1h-11zM2 2h1v12h-1zM14 2h2v14h-2zM2 14h14v2h-14zM1 15h1v1h-1zM0 15h1v1h-1z" fill="#808080"/></svg>
<span class="r" style="left:54.1px;top:499.2px;font:bold 11px/10px 'Liberation Mono',monospace;color:#000;-webkit-text-stroke:.4px #000;transform:scaleX(.95);transform-origin:0 0">I</span>
<span class="t " style="left:70.4px;top:498.2px;color:#000;transform:scaleX(0.851);">Inputs</span>
<div class="r dh" style="left:39px;top:520px;width:9px"></div>
<svg class="r" style="left:49px;top:512px;" width="16" height="16" viewBox="0 0 16 16" shape-rendering="crispEdges"><path d="M3 3h11v11h-11z" fill="#fff"/><path d="M2 2h11v1h-11zM2 2h1v12h-1zM14 2h2v14h-2zM2 14h14v2h-14zM1 15h1v1h-1zM0 15h1v1h-1z" fill="#808080"/></svg>
<span class="r" style="left:54.1px;top:515.2px;font:bold 11px/10px 'Liberation Mono',monospace;color:#000;-webkit-text-stroke:.4px #000;transform:scaleX(.95);transform-origin:0 0">O</span>
<span class="t " style="left:70.4px;top:514.2px;color:#000;transform:scaleX(0.868);">Outputs</span>
<div class="r dh" style="left:39px;top:536px;width:9px"></div>
<svg class="r" style="left:49px;top:528px;" width="16" height="16" viewBox="0 0 16 16" shape-rendering="crispEdges"><path d="M3 3h11v11h-11z" fill="#fff"/><path d="M2 2h11v1h-11zM2 2h1v12h-1zM14 2h2v14h-2zM2 14h14v2h-14zM1 15h1v1h-1zM0 15h1v1h-1z" fill="#808080"/></svg>
<span class="r" style="left:52.4px;top:531.6px;font:bold 9.5px/10px 'Liberation Mono',monospace;color:#000;-webkit-text-stroke:.35px #000;transform:scaleX(.86);transform-origin:0 0;letter-spacing:-.3px">MB</span>
<span class="t " style="left:70.4px;top:530.2px;color:#000;transform:scaleX(0.835);">Memory Bits</span>
<div class="r dh" style="left:39px;top:552px;width:9px"></div>
<svg class="r" style="left:49px;top:544px;" width="16" height="16" viewBox="0 0 16 16" shape-rendering="crispEdges"><path d="M3 3h11v11h-11z" fill="#fff"/><path d="M2 2h11v1h-11zM2 2h1v12h-1zM14 2h2v14h-2zM2 14h14v2h-14zM1 15h1v1h-1zM0 15h1v1h-1z" fill="#808080"/></svg>
<span class="r" style="left:52.4px;top:547.6px;font:bold 9.5px/10px 'Liberation Mono',monospace;color:#000;-webkit-text-stroke:.35px #000;transform:scaleX(.86);transform-origin:0 0;letter-spacing:-.3px">MI</span>
<span class="t " style="left:70.4px;top:546.2px;color:#000;transform:scaleX(0.842);">Memory Integers</span>
<div class="r dh" style="left:39px;top:568px;width:9px"></div>
<svg class="r" style="left:49px;top:560px;" width="16" height="16" viewBox="0 0 16 16" shape-rendering="crispEdges"><path d="M3 3h11v11h-11z" fill="#fff"/><path d="M2 2h11v1h-11zM2 2h1v12h-1zM14 2h2v14h-2zM2 14h14v2h-14zM1 15h1v1h-1zM0 15h1v1h-1z" fill="#808080"/></svg>
<span class="r" style="left:52.4px;top:563.6px;font:bold 9.5px/10px 'Liberation Mono',monospace;color:#000;-webkit-text-stroke:.35px #000;transform:scaleX(.86);transform-origin:0 0;letter-spacing:-.3px">SB</span>
<span class="t " style="left:70.4px;top:562.2px;color:#000;transform:scaleX(0.833);">System Bits</span>
<div class="r dh" style="left:39px;top:584px;width:9px"></div>
<svg class="r" style="left:49px;top:576px;" width="16" height="16" viewBox="0 0 16 16" shape-rendering="crispEdges"><path d="M3 3h11v11h-11z" fill="#fff"/><path d="M2 2h11v1h-11zM2 2h1v12h-1zM14 2h2v14h-2zM2 14h14v2h-14zM1 15h1v1h-1zM0 15h1v1h-1z" fill="#808080"/></svg>
<span class="r" style="left:52.4px;top:579.6px;font:bold 9.5px/10px 'Liberation Mono',monospace;color:#000;-webkit-text-stroke:.35px #000;transform:scaleX(.86);transform-origin:0 0;letter-spacing:-.3px">SI</span>
<span class="t " style="left:70.4px;top:578.2px;color:#000;transform:scaleX(0.841);">System Integers</span>
<div class="r dh" style="left:39px;top:600px;width:9px"></div>
<svg class="r" style="left:49px;top:592px;" width="16" height="16" viewBox="0 0 16 16" shape-rendering="crispEdges"><path d="M3 3h11v11h-11z" fill="#fff"/><path d="M2 2h11v1h-11zM2 2h1v12h-1zM14 2h2v14h-2zM2 14h14v2h-14zM1 15h1v1h-1zM0 15h1v1h-1z" fill="#808080"/></svg>
<span class="r" style="left:54.2px;top:595.4px;font:bold 9.5px/10px 'Liberation Sans',sans-serif;color:#000;-webkit-text-stroke:.5px #000;transform:scale(1.05,.9);transform-origin:0 0">T</span>
<span class="t " style="left:70.4px;top:594.2px;color:#000;transform:scaleX(0.848);">Timers</span>
<div class="r dh" style="left:39px;top:616px;width:9px"></div>
<svg class="r" style="left:49px;top:608px;" width="17" height="16" viewBox="0 0 17 16" shape-rendering="crispEdges"><path d="M2.5 2V14M13.5 0V8M5 4H8V11H10.5V3.5H13.5M5.5 8 V12 H8" stroke="#0000ff" stroke-width="1.1" fill="none"/><path d="M0 2h6v7h-6zM11 8h6v6h-6z" fill="#0000ff"/><path d="M1 3h4v5h-4z" fill="#ffff00"/><path d="M12 9h4v4h-4z" fill="#00ff00"/><polygon points="2.5,0 4.5,2 0.5,2" fill="#0000ff"/><polygon points="11.5,14 15.5,14 13.5,16" fill="#0000c0"/></svg>
<span class="t " style="left:70.4px;top:610.2px;color:#000;transform:scaleX(0.869);">M90 Network</span>
<div class="r" style="left:13px;top:628px;width:9px;height:9px;background:#808080;"></div>
<div class="r" style="left:14px;top:629px;width:7px;height:7px;background:#fff;"></div>
<div class="r" style="left:15px;top:632px;width:5px;height:1px;background:#000;"></div>
<div class="r dh" style="left:23px;top:632px;width:5px"></div>
<svg class="r" style="left:29px;top:624px;" width="16" height="16" viewBox="0 0 16 16" shape-rendering="crispEdges"><path d="M3 2h5v2h-5zM1 4h13v2h-13z" fill="#c0c0c0"/><path d="M2 3h1v1h-1z" fill="#a0a0a0"/><path d="M7.4 0.8l1.8 1.8" stroke="#000" stroke-width="1.2" fill="none" shape-rendering="auto"/><path d="M0 6h15v7h-15zM1 13h14v1h-14z" fill="#ffff00"/><path d="M15 3h1v12h-1zM2 14h14v1h-14z" fill="#000"/><path d="M0 7h1v3h-1zM14 8h1v3h-1z" fill="#808080"/></svg>
<span class="t " style="left:50.4px;top:626.2px;color:#000;transform:scaleX(0.925);">Tools</span>
<div class="r dh" style="left:39px;top:648px;width:9px"></div>
<svg class="r" style="left:50px;top:641px;" width="15" height="13" viewBox="0 0 15 13" shape-rendering="crispEdges"><path d="M3 0h3v3h-3zM9 0h3v3h-3zM2 3h5v2h-5zM8 3h5v2h-5zM1 5h6v1h-6zM8 5h6v1h-6zM0 6h15v3h-15zM0 9h7v1h-7zM8 9h7v1h-7zM0 10h5v3h-5zM10 10h5v3h-5z" fill="#000"/><path d="M4 1h1v1h-1zM10 1h1v1h-1zM3 4h1v1h-1zM9 4h1v1h-1zM2 6h1v3h-1zM6 6h1v2h-1zM9 6h1v3h-1zM1 10h1v2h-1zM11 10h1v2h-1z" fill="#fff"/></svg>
<span class="t " style="left:70.4px;top:642.2px;color:#000;transform:scaleX(0.863);">Find</span>
</body></html>
